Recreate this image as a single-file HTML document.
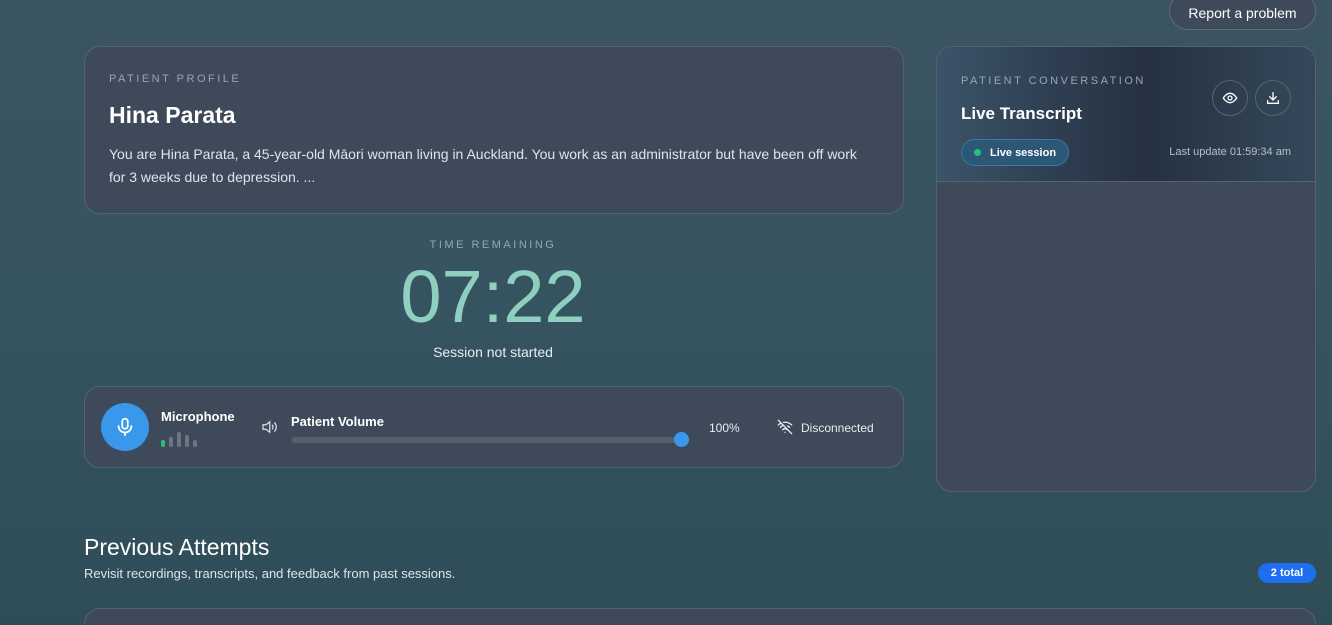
<!DOCTYPE html>
<html><head><meta charset="utf-8"><style>
*{box-sizing:border-box;margin:0;padding:0}
html{width:1332px;height:625px;overflow:hidden}
body{width:1332px;height:625px;overflow:hidden;font-family:"Liberation Sans",sans-serif;color:#fff;background:linear-gradient(180deg,#3b5462 0%,#365460 50%,#2e4d57 100%);position:relative}
.card{position:absolute;background:#3e4a5a;border:1px solid #55626f;border-radius:16px}
.lbl{font-size:11px;letter-spacing:2.5px;color:#9aa5b1}
.btn{position:absolute;left:1169px;top:-8px;width:147px;height:38px;border-radius:19px;background:#3e4a5a;border:1px solid #5f6b77;font-size:14px;display:flex;align-items:center;justify-content:center;padding-top:3px}
.circ{position:absolute;width:36px;height:36px;border-radius:50%;border:1px solid #5a6470;display:flex;align-items:center;justify-content:center}
</style></head><body>
<div class="btn">Report a problem</div>

<div class="card" style="left:84px;top:46px;width:820px;height:168px">
<div class="lbl" style="position:absolute;left:24px;top:26px">PATIENT PROFILE</div>
<div style="position:absolute;left:24px;top:55px;font-size:23px;font-weight:bold">Hina Parata</div>
<div style="position:absolute;left:24px;top:96px;font-size:14px;line-height:23px;color:#dfe4ea;width:765px">You are Hina Parata, a 45-year-old Māori woman living in Auckland. You work as an administrator but have been off work for 3 weeks due to depression. ...</div>
</div>

<div class="lbl" style="position:absolute;left:0;width:986px;text-align:center;top:239px">TIME REMAINING</div>
<div style="position:absolute;left:0;width:986px;text-align:center;top:256px;font-size:74px;color:#8fcfc0;line-height:82px">07:22</div>
<div style="position:absolute;left:0;width:986px;text-align:center;top:344px;font-size:14px;color:#e8ecef">Session not started</div>

<div class="card" style="left:84px;top:386px;width:820px;height:82px">
<div style="position:absolute;left:16px;top:16px;width:48px;height:48px;border-radius:50%;background:#3a98ec;display:flex;align-items:center;justify-content:center">
<svg width="22" height="22" viewBox="0 0 24 24" fill="none" stroke="#fff" stroke-width="2" stroke-linecap="round"><rect x="9" y="3" width="6" height="11" rx="3"/><path d="M5 11a7 7 0 0 0 14 0M12 18v3"/></svg></div>
<div style="position:absolute;left:76px;top:22px;font-size:13px;font-weight:bold">Microphone</div>
<div style="position:absolute;left:76px;top:44px;display:flex;align-items:flex-end;gap:4px;height:16px">
<i style="width:4px;height:7px;background:#22c07a;border-radius:2px"></i><i style="width:4px;height:10px;background:#6b7683;border-radius:2px"></i><i style="width:4px;height:15px;background:#6b7683;border-radius:2px"></i><i style="width:4px;height:12px;background:#6b7683;border-radius:2px"></i><i style="width:4px;height:7px;background:#6b7683;border-radius:2px"></i></div>
<svg style="position:absolute;left:174px;top:31px" width="20" height="18" viewBox="0 0 24 24" fill="none" stroke="#dfe4ea" stroke-width="1.6"><path d="M4 9h4l5-4v14l-5-4H4z"/><path d="M16 9a4 4 0 0 1 0 6M19 6a8 8 0 0 1 0 12"/></svg>
<div style="position:absolute;left:206px;top:27px;font-size:13px;font-weight:bold">Patient Volume</div>
<div style="position:absolute;left:206px;top:50px;width:392px;height:6px;border-radius:3px;background:#55606c"></div>
<div style="position:absolute;left:589px;top:45px;width:15px;height:15px;border-radius:50%;background:#3a98ec"></div>
<div style="position:absolute;left:624px;top:34px;font-size:12px;color:#e8ecef">100%</div>
<svg style="position:absolute;left:692px;top:32px" width="16" height="16" viewBox="0 0 24 24" fill="none" stroke="#e8ecef" stroke-width="2" stroke-linecap="round"><path d="M2 2l20 20M5 12.5a10 10 0 0 1 5-3M2 8.8a15 15 0 0 1 4-2.5M19 12.5a10 10 0 0 0-3-2M22 8.8A15 15 0 0 0 10 5M8.5 16a5 5 0 0 1 7 0M12 20h0"/></svg>
<div style="position:absolute;left:716px;top:34px;font-size:12px;color:#e8ecef">Disconnected</div>
</div>

<div class="card" style="left:936px;top:46px;width:380px;height:446px;overflow:hidden">
<div style="position:absolute;left:0;top:0;width:380px;height:135px;background:linear-gradient(90deg,#3b5468 0%,#2f3f52 30%,#253142 55%,#35495a 100%);border-bottom:1px solid #556270"></div>
<div class="lbl" style="position:absolute;left:24px;top:28px">PATIENT CONVERSATION</div>
<div style="position:absolute;left:24px;top:57px;font-size:17px;font-weight:bold">Live Transcript</div>
<div class="circ" style="left:275px;top:33px"><svg width="16" height="16" viewBox="0 0 24 24" fill="none" stroke="#fff" stroke-width="2"><path d="M2 12s4-7 10-7 10 7 10 7-4 7-10 7S2 12 2 12z"/><circle cx="12" cy="12" r="3"/></svg></div>
<div class="circ" style="left:318px;top:33px"><svg width="16" height="16" viewBox="0 0 24 24" fill="none" stroke="#fff" stroke-width="2" stroke-linecap="round"><path d="M12 4v11M7 10l5 5 5-5M4 16v4h16v-4"/></svg></div>
<div style="position:absolute;left:24px;top:92px;width:108px;height:27px;border-radius:14px;background:#2c5775;border:1px solid #3a78a6;font-size:11px;font-weight:bold;display:flex;align-items:center;padding-left:28px">Live session</div>
<div style="position:absolute;left:37px;top:102px;width:7px;height:7px;border-radius:50%;background:#22c07a"></div>
<div style="position:absolute;right:24px;top:99px;font-size:11px;color:#b7c0ca">Last update 01:59:34 am</div>
</div>

<div style="position:absolute;left:84px;top:534px;font-size:23px">Previous Attempts</div>
<div style="position:absolute;left:84px;top:566px;font-size:13px;color:#dfe4ea">Revisit recordings, transcripts, and feedback from past sessions.</div>
<div style="position:absolute;left:1258px;top:563px;width:58px;height:20px;border-radius:10px;background:#1f6ef0;font-size:11px;font-weight:bold;display:flex;align-items:center;justify-content:center">2 total</div>
<div class="card" style="left:84px;top:608px;width:1232px;height:40px"></div>
</body></html>
